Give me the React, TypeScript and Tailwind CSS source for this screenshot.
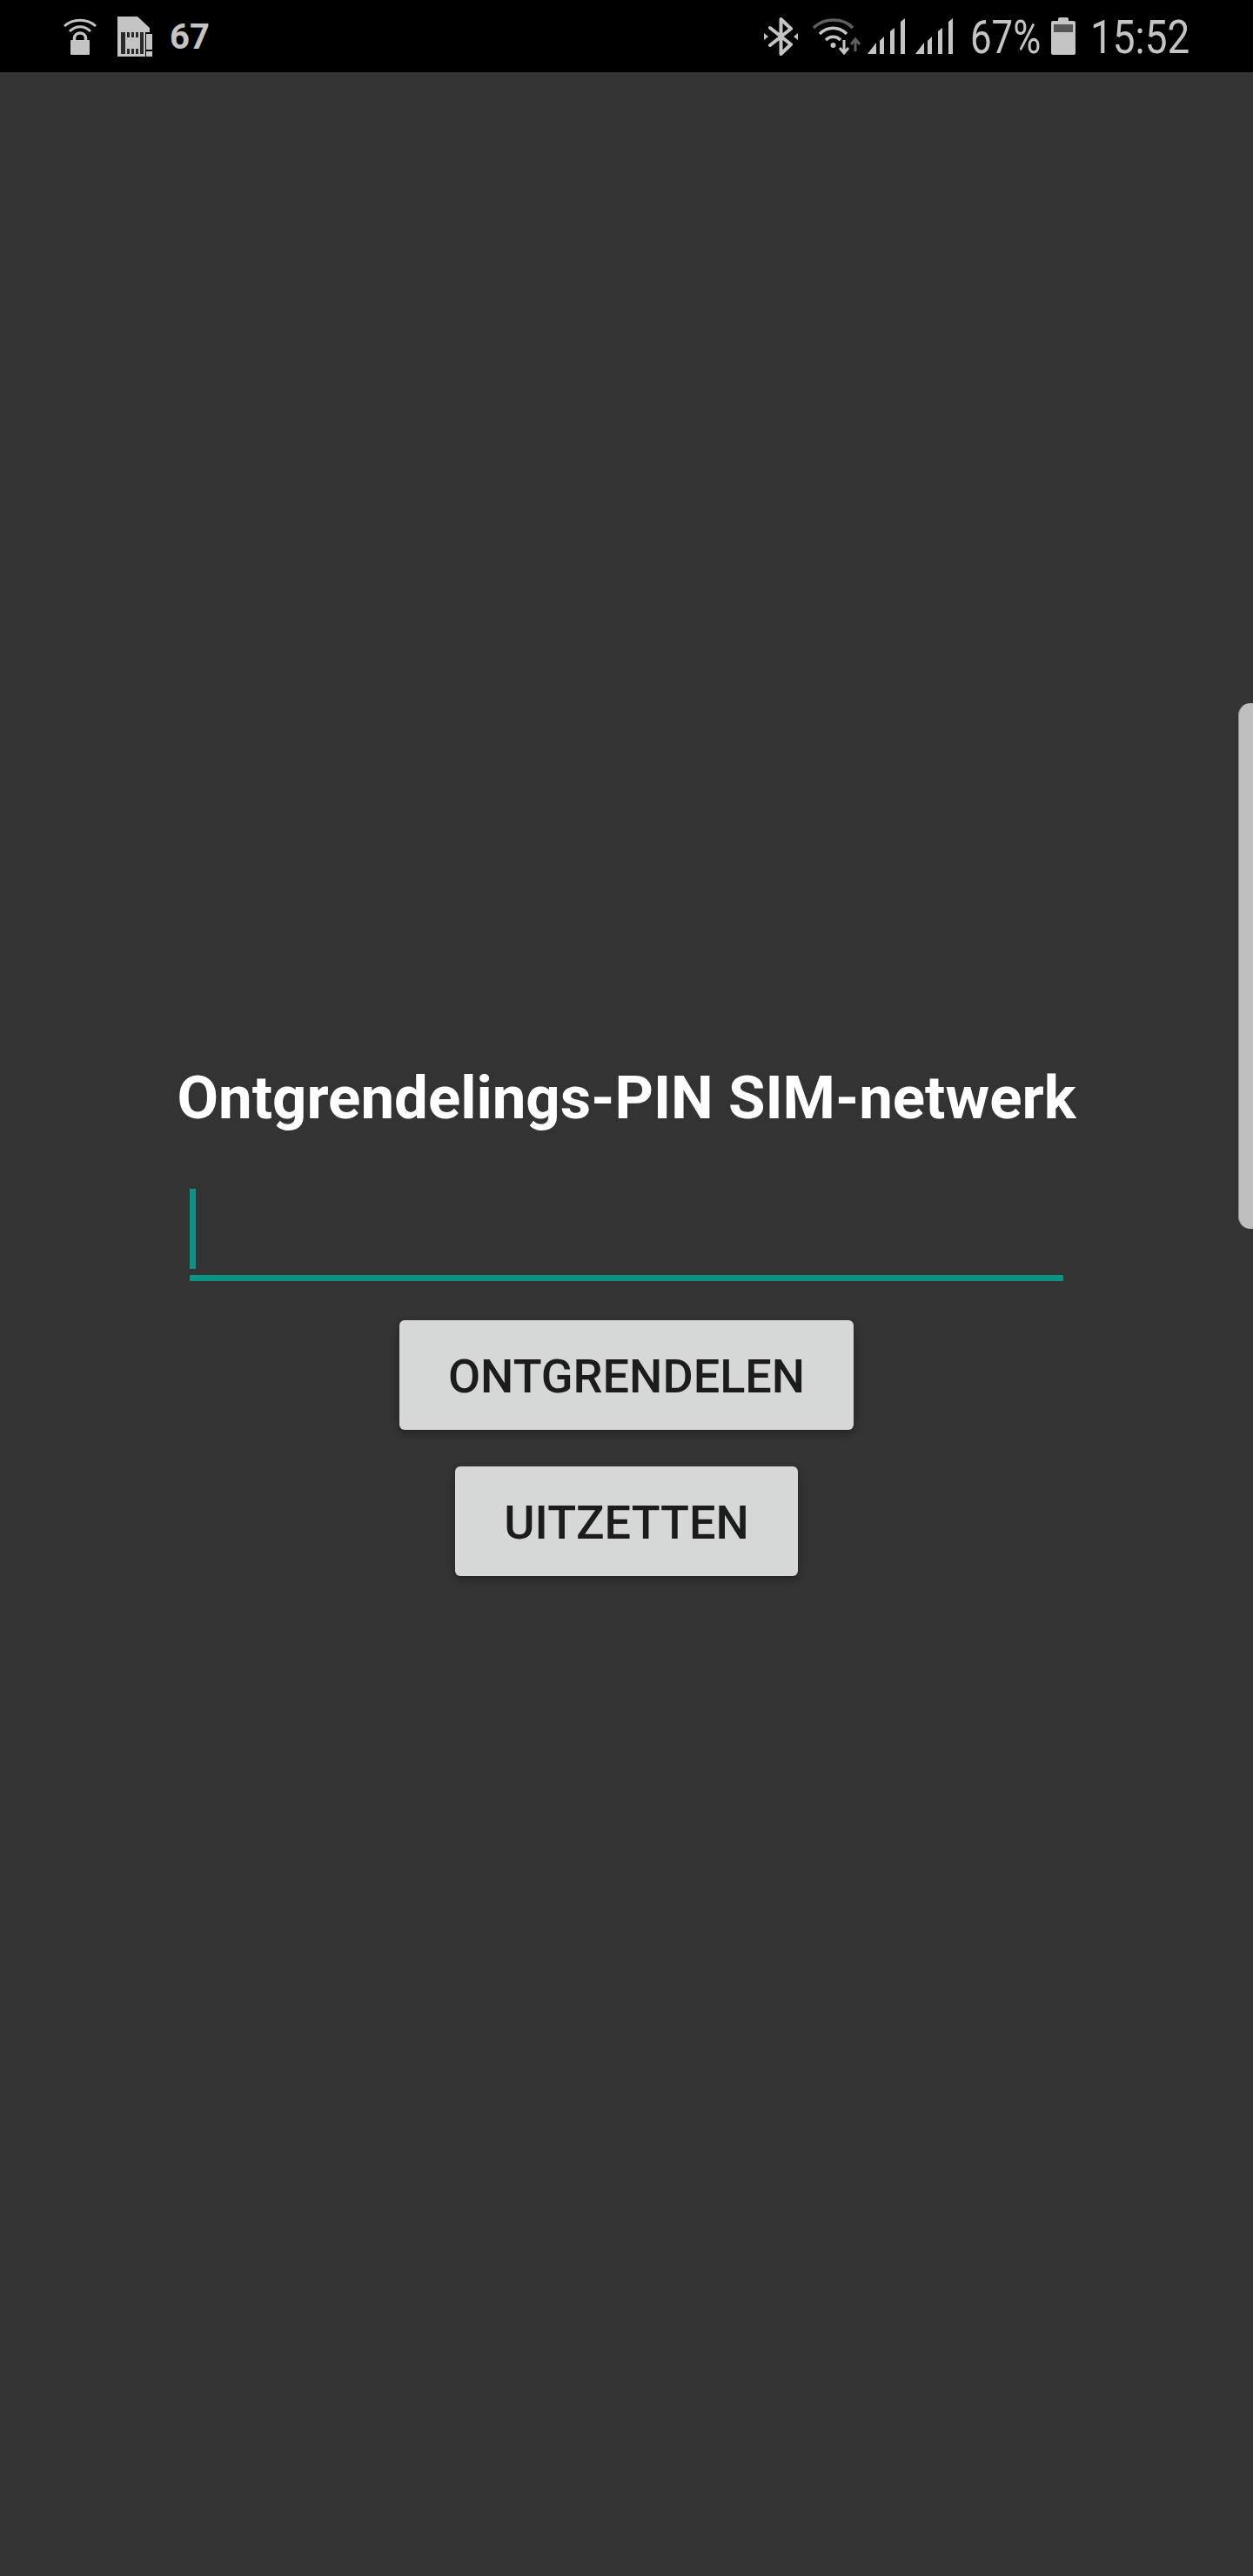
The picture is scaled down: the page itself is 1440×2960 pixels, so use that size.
const roboto = { fontFamily: 'Roboto, sans-serif' };

function WifiLock() {
  return (
    <svg width="38" height="42" viewBox="0 0 38 42" fill="none">
      <path d="M1 9 C11 0 27 0 37 9" stroke="#c4c4c4" strokeWidth="3" />
      <path d="M7 15 C14 8 24 8 31 15" stroke="#c4c4c4" strokeWidth="3" />
      <path d="M12.5 26 V23 C12.5 15 25.5 15 25.5 23 V26" stroke="#c4c4c4" strokeWidth="3.5" />
      <rect x="8" y="25" width="22" height="17" rx="1" fill="#c4c4c4" />
    </svg>
  );
}

function SimAlert() {
  return (
    <svg width="42" height="48" viewBox="0 0 42 48">
      <path d="M1 1 H24 L38 14 V19 H33 V47 H1 Z" fill="#c4c4c4" />
      <rect x="5" y="19" width="26" height="25" fill="#2a2a2a" />
      <rect x="10" y="19" width="2" height="25" fill="#c4c4c4" />
      <rect x="15" y="19" width="2" height="25" fill="#c4c4c4" />
      <rect x="20" y="19" width="2" height="25" fill="#c4c4c4" />
      <rect x="25" y="19" width="2" height="25" fill="#c4c4c4" />
      <rect x="11" y="25" width="15" height="13" fill="#c4c4c4" />
      <rect x="34" y="21" width="7" height="18" fill="#c4c4c4" />
      <rect x="34" y="41" width="7" height="6" fill="#c4c4c4" />
    </svg>
  );
}

function Bluetooth() {
  return (
    <svg width="39" height="44" viewBox="0 0 39 44" fill="none">
      <path d="M7 12 L31 31 L19.5 42 V2 L31 13 L7 32" stroke="#c4c4c4" strokeWidth="4" strokeLinejoin="round" strokeLinecap="round" />
      <path d="M0 18 L5 22 L0 26 Z M39 18 L34 22 L39 26 Z" fill="#c4c4c4" />
    </svg>
  );
}

function WifiArrows() {
  return (
    <svg width="55" height="42" viewBox="0 0 55 42" fill="none">
      <path d="M1 11 C13 -1 35 -1 46 11" stroke="#5f5f5f" strokeWidth="3.5" />
      <path d="M8 18 C17 9 30 9 39 18" stroke="#c4c4c4" strokeWidth="3.5" />
      <path d="M15 25 C20 20 27 20 32 25" stroke="#c4c4c4" strokeWidth="3.5" />
      <circle cx="23.5" cy="31" r="3" fill="#c4c4c4" />
      <path d="M36 25 V40 M31 34 L36 40 L41 34" stroke="#c4c4c4" strokeWidth="3" />
      <path d="M49 38 V24 M44 30 L49 24 L54 30" stroke="#5f5f5f" strokeWidth="3" />
    </svg>
  );
}

function Signal() {
  return (
    <svg width="43" height="42" viewBox="0 0 43 42">
      <path d="M0 41 L10 28 V41 Z" fill="#c4c4c4" />
      <path d="M14 26 L19 21 V41 H14 Z" fill="#c4c4c4" />
      <path d="M26 15 L31 11 V41 H26 Z" fill="#c4c4c4" />
      <path d="M38 4 L43 0 V41 H38 Z" fill="#c4c4c4" />
    </svg>
  );
}

function Battery() {
  return (
    <svg width="28" height="43" viewBox="0 0 28 43">
      <path d="M8 4 V2 Q8 0 10 0 H18 Q20 0 20 2 V4 H26 Q28 4 28 6 V41 Q28 43 26 43 H2 Q0 43 0 41 V6 Q0 4 2 4 Z" fill="#c4c4c4" />
      <rect x="3" y="8" width="22" height="9" fill="#555555" />
    </svg>
  );
}

export default function App() {
  return (
    <div className="w-[1440px] h-[2960px] bg-[#333333] flex flex-col relative overflow-hidden" style={roboto}>
      <div className="h-[83px] bg-black flex items-center justify-between pl-[73px] pr-[77px]">
        <div className="flex items-center">
          <WifiLock />
          <div className="ml-[23px]"><SimAlert /></div>
          <span className="ml-[19px] pt-[2px] text-[40px] font-bold text-[#c4c4c4] leading-none">67</span>
        </div>
        <div className="flex items-center">
          <Bluetooth />
          <div className="ml-[17px]"><WifiArrows /></div>
          <div className="ml-[8px]"><Signal /></div>
          <div className="ml-[12px]"><Signal /></div>
          <span className="ml-[20px] pt-[2px] w-[79px] text-[54px] text-[#c4c4c4] leading-none whitespace-nowrap origin-left scale-x-[0.81]">67%</span>
          <div className="ml-[14px]"><Battery /></div>
          <span className="ml-[17px] pt-[2px] w-[110px] text-[54px] text-[#c4c4c4] leading-none whitespace-nowrap origin-left scale-x-[0.85]">15:52</span>
        </div>
      </div>

      <main className="flex flex-col items-center pt-[1135px]">
        <h1 className="text-[69px] leading-[88px] font-bold text-white whitespace-nowrap">Ontgrendelings-PIN SIM-netwerk</h1>
        <div className="w-[1004px] h-[106px] mt-[60px] border-b-[7px] border-[#0b9485]">
          <div className="w-[7px] h-[92px] bg-[#0b9485]"></div>
        </div>
        <button className="mt-[45px] h-[126px] w-[522px] pt-[2px] rounded-[6px] bg-[#d6d7d7] text-[#1c1c1c] text-[54px] font-medium shadow-[0_4px_8px_rgba(0,0,0,0.3)]">ONTGRENDELEN</button>
        <button className="mt-[42px] h-[126px] w-[394px] pt-[2px] rounded-[6px] bg-[#d6d7d7] text-[#1c1c1c] text-[54px] font-medium shadow-[0_4px_8px_rgba(0,0,0,0.3)]">UITZETTEN</button>
      </main>

      <div className="absolute right-0 top-[808px] w-[17px] h-[604px] bg-[#bfbfbf] rounded-l-[14px] border-l border-[#8f8f8f]"></div>
    </div>
  );
}
